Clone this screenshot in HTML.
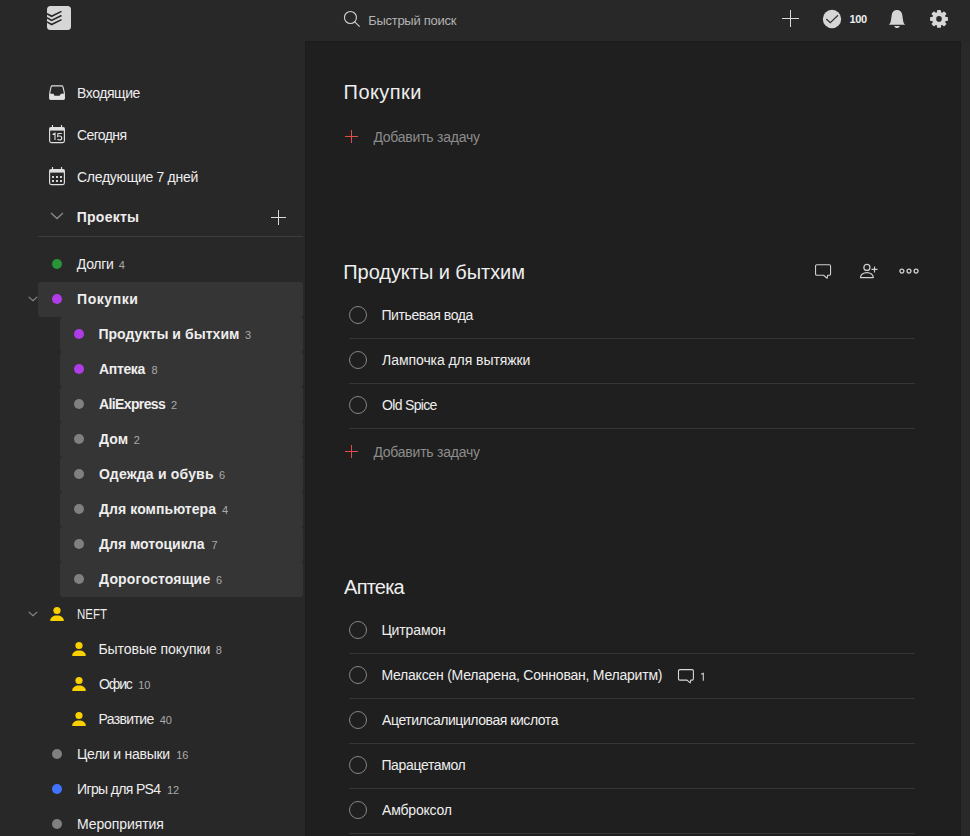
<!DOCTYPE html>
<html><head><meta charset="utf-8">
<style>
*{margin:0;padding:0;box-sizing:border-box}
html,body{width:970px;height:836px;overflow:hidden;background:#1f1f1f;font-family:"Liberation Sans",sans-serif;color:#eeeeee}
#top{position:absolute;left:0;top:0;width:970px;height:41px;background:#282828}
#side{position:absolute;left:0;top:41px;width:305px;height:795px;background:#282828}
#main{position:absolute;left:305px;top:41px;width:656px;height:795px;background:#1f1f1f}
#rstrip{position:absolute;left:961px;top:41px;width:9px;height:795px;background:#292929}
.t{position:absolute;white-space:nowrap}
.hl{position:absolute;background:#353535;border-radius:3px}
.dot{position:absolute;width:10px;height:10px;border-radius:50%}
.line{position:absolute;height:1px;background:#363636}
.circ{position:absolute;width:18px;height:18px;border:1px solid #858585;border-radius:50%}
svg{position:absolute;overflow:visible}
</style></head><body>
<div id="top"></div>
<div id="side"></div>
<div id="main"></div>
<div id="rstrip"></div>
<div style="position:absolute;left:0;top:41px;width:305px;height:1px;background:#262626"></div>
<div style="position:absolute;left:961px;top:41px;width:9px;height:1px;background:#262626"></div>
<div style="position:absolute;left:305px;top:41px;width:656px;height:1px;background:#1b1b1b"></div>
<div style="position:absolute;left:305px;top:41px;width:1px;height:795px;background:#1c1c1c"></div>
<div style="position:absolute;left:960px;top:41px;width:1px;height:795px;background:#1c1c1c"></div>
<svg style="left:47px;top:6px" width="24" height="24" viewBox="0 0 24 24">
<rect x="0" y="0" width="24" height="24" rx="3.5" fill="#d6d6d6"/>
<g fill="none" stroke="#282828" stroke-width="1.6" stroke-linejoin="miter">
<path d="M0 7.7 L4.6 10.3 L14.5 5.4"/>
<path d="M0 11.8 L4.6 14.4 L14.5 9.5"/>
<path d="M0 15.9 L4.6 18.5 L14.5 13.6"/>
</g></svg>
<svg style="left:343px;top:11px" width="18" height="17" viewBox="0 0 18 17">
<circle cx="7.45" cy="6.5" r="6.0" fill="none" stroke="#d0d0d0" stroke-width="1.1"/>
<path d="M11.7 10.8 L16.7 15.6" stroke="#d0d0d0" stroke-width="1.1"/>
</svg>
<div class="t" style="left:368.15px;top:10.89px;font-size:13px;line-height:20px;color:#b3b3b3;letter-spacing:-0.266px">Быстрый поиск</div>
<div style="position:absolute;left:790px;top:10px;width:1px;height:17px;background:#dadada"></div>
<div style="position:absolute;left:782px;top:18px;width:17px;height:1px;background:#dadada"></div>
<svg style="left:822px;top:9px" width="20" height="20" viewBox="0 0 20 20">
<circle cx="10" cy="10" r="9.2" fill="#d6d6d6"/>
<path d="M4.3 10 L8.3 13.7 L16 6.3" fill="none" stroke="#333" stroke-width="1.25"/>
</svg>
<div class="t" style="left:849.60px;top:9.19px;font-size:11px;line-height:20px;color:#eeeeee;letter-spacing:0.000px;font-weight:bold;letter-spacing:-0.45px">100</div>
<svg style="left:888px;top:9px" width="18" height="20" viewBox="0 0 18 20">
<path d="M9 1.0 C11.7 1.0 13.9 2.9 14.2 5.6 L15.0 11 C15.3 13.2 15.9 14.6 16.8 15.3 V15.8 H1.2 V15.3 C2.1 14.6 2.7 13.2 3.0 11 L3.8 5.6 C4.1 2.9 6.3 1.0 9 1.0 Z" fill="#d6d6d6"/>
<path d="M6.2 16.9 L11.8 16.9 C11.2 18.3 10.2 19 9 19 C7.8 19 6.8 18.3 6.2 16.9 Z" fill="#d6d6d6"/>
</svg>
<svg style="left:929px;top:9px" width="20" height="20" viewBox="0 0 20 20">
<g fill="#d6d6d6"><circle cx="10" cy="9.9" r="6.9"/><rect x="8" y="0.95" width="4" height="5" rx="0.9" transform="rotate(0 10 9.9)"/><rect x="8" y="0.95" width="4" height="5" rx="0.9" transform="rotate(45 10 9.9)"/><rect x="8" y="0.95" width="4" height="5" rx="0.9" transform="rotate(90 10 9.9)"/><rect x="8" y="0.95" width="4" height="5" rx="0.9" transform="rotate(135 10 9.9)"/><rect x="8" y="0.95" width="4" height="5" rx="0.9" transform="rotate(180 10 9.9)"/><rect x="8" y="0.95" width="4" height="5" rx="0.9" transform="rotate(225 10 9.9)"/><rect x="8" y="0.95" width="4" height="5" rx="0.9" transform="rotate(270 10 9.9)"/><rect x="8" y="0.95" width="4" height="5" rx="0.9" transform="rotate(315 10 9.9)"/></g>
<circle cx="10" cy="9.9" r="2.8" fill="#282828"/>
</svg>
<svg style="left:44px;top:80px" width="26" height="24" viewBox="0 0 26 24">
<path d="M8.2 5.85 H17.8 C18.4 5.85 18.8 6.2 18.9 6.7 L20.25 12.3 V18.6 C20.25 19 19.9 19.25 19.5 19.25 H6.5 C6.1 19.25 5.85 19 5.85 18.6 V12.3 L7.1 6.7 C7.2 6.2 7.6 5.85 8.2 5.85 Z" fill="none" stroke="#e0e0e0" stroke-width="1.1" stroke-linejoin="round"/>
<path d="M5.3 13.8 H9.5 L10.5 15.8 H15.6 L16.9 13.8 H20.8 V18.6 C20.8 19.3 20.3 19.8 19.6 19.8 H6.5 C5.8 19.8 5.3 19.3 5.3 18.6 Z" fill="#e0e0e0"/>
</svg>
<div class="t" style="left:77.00px;top:83.15px;font-size:14px;line-height:20px;color:#eeeeee;letter-spacing:-0.429px">Входящие</div>
<svg style="left:48px;top:124px" width="18" height="20" viewBox="0 0 18 20">
<rect x="1.6" y="3.6" width="14.8" height="15" rx="1.8" fill="none" stroke="#e0e0e0" stroke-width="1.15"/>
<rect x="1.6" y="3.6" width="14.8" height="3" fill="#e0e0e0"/>
<path d="M4.5 1 V4 M13.5 1 V4" stroke="#e0e0e0" stroke-width="1.15"/>
<path d="M4.6 10.4 L7 9.1 V16 M13.8 9.55 H10 L9.65 12.4 C10.15 12.1 10.75 11.95 11.45 11.95 C12.9 11.95 13.8 12.8 13.8 13.95 C13.8 15.2 12.8 15.95 11.45 15.95 C10.65 15.95 9.95 15.7 9.45 15.3" fill="none" stroke="#e0e0e0" stroke-width="1.1"/>
</svg>
<div class="t" style="left:77.00px;top:125.15px;font-size:14px;line-height:20px;color:#eeeeee;letter-spacing:-0.616px">Сегодня</div>
<svg style="left:48px;top:166px" width="18" height="20" viewBox="0 0 18 20">
<rect x="1.6" y="3.6" width="14.8" height="15" rx="1.8" fill="none" stroke="#e0e0e0" stroke-width="1.15"/>
<rect x="1.6" y="3.6" width="14.8" height="3" fill="#e0e0e0"/>
<path d="M4.5 1 V4 M13.5 1 V4" stroke="#e0e0e0" stroke-width="1.15"/>
<g fill="#d4d4d4"><rect x="4" y="10" width="2" height="2"/><rect x="8" y="10" width="2" height="2"/><rect x="12" y="10" width="2" height="2"/>
<rect x="4" y="14" width="2" height="2"/><rect x="8" y="14" width="2" height="2"/><rect x="12" y="14" width="2" height="2"/></g>
</svg>
<div class="t" style="left:77.00px;top:167.15px;font-size:14px;line-height:20px;color:#eeeeee;letter-spacing:-0.293px">Следующие 7 дней</div>
<svg style="left:50px;top:212px" width="14" height="8" viewBox="0 0 14 8">
<path d="M1 1 L7 6.5 L13 1" fill="none" stroke="#8a8a8a" stroke-width="1.3"/>
</svg>
<div class="t" style="left:76.69px;top:207.15px;font-size:14px;line-height:20px;color:#eeeeee;letter-spacing:0.267px;font-weight:bold">Проекты</div>
<div style="position:absolute;left:278px;top:210px;width:1px;height:15px;background:#dadada"></div>
<div style="position:absolute;left:271px;top:217px;width:15px;height:1px;background:#dadada"></div>
<div class="line" style="left:38px;top:236px;width:265px;background:#3d3d3d"></div>
<div class="dot" style="left:52px;top:259px;background:#299438"></div>
<div class="t" style="left:76.87px;top:254.15px;font-size:14px;line-height:20px;color:#eeeeee;letter-spacing:-0.325px">Долги</div>
<div class="t" style="left:118.70px;top:255.19px;font-size:11px;line-height:20px;color:#aaaaaa;letter-spacing:0.000px">4</div>
<div class="hl" style="left:38px;top:282px;width:265px;height:35px"></div>
<svg style="left:28px;top:296px" width="10" height="6" viewBox="0 0 10 6"><path d="M0.7 0.8 L5 4.7 L9.3 0.8" fill="none" stroke="#8a8a8a" stroke-width="1.1"/></svg>
<div class="dot" style="left:52px;top:294px;background:#b03ce8"></div>
<div class="t" style="left:77.00px;top:289.15px;font-size:14px;line-height:20px;color:#eeeeee;letter-spacing:0.583px;font-weight:bold">Покупки</div>
<div class="hl" style="left:60px;top:317px;width:243px;height:35px"></div>
<div class="dot" style="left:74px;top:329px;background:#b03ce8"></div>
<div class="t" style="left:98.38px;top:324.15px;font-size:14px;line-height:20px;color:#eeeeee;letter-spacing:0.051px;font-weight:bold">Продукты и бытхим</div>
<div class="t" style="left:244.90px;top:325.19px;font-size:11px;line-height:20px;color:#aaaaaa;letter-spacing:0.000px">3</div>
<div class="hl" style="left:60px;top:352px;width:243px;height:35px"></div>
<div class="dot" style="left:74px;top:364px;background:#b03ce8"></div>
<div class="t" style="left:99.08px;top:359.15px;font-size:14px;line-height:20px;color:#eeeeee;letter-spacing:-0.360px;font-weight:bold">Аптека</div>
<div class="t" style="left:151.50px;top:360.19px;font-size:11px;line-height:20px;color:#aaaaaa;letter-spacing:0.000px">8</div>
<div class="hl" style="left:60px;top:387px;width:243px;height:35px"></div>
<div class="dot" style="left:74px;top:399px;background:#808080"></div>
<div class="t" style="left:99.08px;top:394.15px;font-size:14px;line-height:20px;color:#eeeeee;letter-spacing:-0.633px;font-weight:bold">AliExpress</div>
<div class="t" style="left:171.00px;top:395.19px;font-size:11px;line-height:20px;color:#aaaaaa;letter-spacing:0.000px">2</div>
<div class="hl" style="left:60px;top:422px;width:243px;height:35px"></div>
<div class="dot" style="left:74px;top:434px;background:#808080"></div>
<div class="t" style="left:99.08px;top:429.15px;font-size:14px;line-height:20px;color:#eeeeee;letter-spacing:0.100px;font-weight:bold">Дом</div>
<div class="t" style="left:133.70px;top:430.19px;font-size:11px;line-height:20px;color:#aaaaaa;letter-spacing:0.000px">2</div>
<div class="hl" style="left:60px;top:457px;width:243px;height:35px"></div>
<div class="dot" style="left:74px;top:469px;background:#808080"></div>
<div class="t" style="left:99.08px;top:464.15px;font-size:14px;line-height:20px;color:#eeeeee;letter-spacing:0.185px;font-weight:bold">Одежда и обувь</div>
<div class="t" style="left:219.00px;top:465.19px;font-size:11px;line-height:20px;color:#aaaaaa;letter-spacing:0.000px">6</div>
<div class="hl" style="left:60px;top:492px;width:243px;height:35px"></div>
<div class="dot" style="left:74px;top:504px;background:#808080"></div>
<div class="t" style="left:99.08px;top:499.15px;font-size:14px;line-height:20px;color:#eeeeee;letter-spacing:0.061px;font-weight:bold">Для компьютера</div>
<div class="t" style="left:222.10px;top:500.19px;font-size:11px;line-height:20px;color:#aaaaaa;letter-spacing:0.000px">4</div>
<div class="hl" style="left:60px;top:527px;width:243px;height:35px"></div>
<div class="dot" style="left:74px;top:539px;background:#808080"></div>
<div class="t" style="left:99.08px;top:534.15px;font-size:14px;line-height:20px;color:#eeeeee;letter-spacing:-0.016px;font-weight:bold">Для мотоцикла</div>
<div class="t" style="left:211.50px;top:535.19px;font-size:11px;line-height:20px;color:#aaaaaa;letter-spacing:0.000px">7</div>
<div class="hl" style="left:60px;top:562px;width:243px;height:35px"></div>
<div class="dot" style="left:74px;top:574px;background:#808080"></div>
<div class="t" style="left:99.08px;top:569.15px;font-size:14px;line-height:20px;color:#eeeeee;letter-spacing:0.175px;font-weight:bold">Дорогостоящие</div>
<div class="t" style="left:216.00px;top:570.19px;font-size:11px;line-height:20px;color:#aaaaaa;letter-spacing:0.000px">6</div>
<svg style="left:28px;top:611px" width="10" height="6" viewBox="0 0 10 6"><path d="M0.7 0.8 L5 4.7 L9.3 0.8" fill="none" stroke="#8a8a8a" stroke-width="1.1"/></svg>
<svg style="left:49px;top:607px" width="16" height="16" viewBox="0 0 16 16"><circle cx="8" cy="3.5" r="3.6" fill="#fad000"/><path d="M1.2 13.6 C1.2 10.7 4.1 8.6 8 8.6 C11.9 8.6 14.8 10.7 14.8 13.6 C14.8 13.9 14.6 14 14.3 14 H1.7 C1.4 14 1.2 13.9 1.2 13.6 Z" fill="#fad000"/></svg>
<div class="t" style="left:77.00px;top:604.15px;font-size:14px;line-height:20px;color:#eeeeee;letter-spacing:0.000px;transform:scaleX(0.82);transform-origin:0 0">NEFT</div>
<svg style="left:71px;top:642px" width="16" height="16" viewBox="0 0 16 16"><circle cx="8" cy="3.5" r="3.6" fill="#fad000"/><path d="M1.2 13.6 C1.2 10.7 4.1 8.6 8 8.6 C11.9 8.6 14.8 10.7 14.8 13.6 C14.8 13.9 14.6 14 14.3 14 H1.7 C1.4 14 1.2 13.9 1.2 13.6 Z" fill="#fad000"/></svg>
<div class="t" style="left:98.38px;top:639.15px;font-size:14px;line-height:20px;color:#eeeeee;letter-spacing:-0.042px">Бытовые покупки</div>
<div class="t" style="left:215.80px;top:640.19px;font-size:11px;line-height:20px;color:#aaaaaa;letter-spacing:0.000px">8</div>
<svg style="left:71px;top:677px" width="16" height="16" viewBox="0 0 16 16"><circle cx="8" cy="3.5" r="3.6" fill="#fad000"/><path d="M1.2 13.6 C1.2 10.7 4.1 8.6 8 8.6 C11.9 8.6 14.8 10.7 14.8 13.6 C14.8 13.9 14.6 14 14.3 14 H1.7 C1.4 14 1.2 13.9 1.2 13.6 Z" fill="#fad000"/></svg>
<div class="t" style="left:99.08px;top:674.15px;font-size:14px;line-height:20px;color:#eeeeee;letter-spacing:-1.167px">Офис</div>
<div class="t" style="left:138.20px;top:675.19px;font-size:11px;line-height:20px;color:#aaaaaa;letter-spacing:0.000px">10</div>
<svg style="left:71px;top:712px" width="16" height="16" viewBox="0 0 16 16"><circle cx="8" cy="3.5" r="3.6" fill="#fad000"/><path d="M1.2 13.6 C1.2 10.7 4.1 8.6 8 8.6 C11.9 8.6 14.8 10.7 14.8 13.6 C14.8 13.9 14.6 14 14.3 14 H1.7 C1.4 14 1.2 13.9 1.2 13.6 Z" fill="#fad000"/></svg>
<div class="t" style="left:98.38px;top:709.15px;font-size:14px;line-height:20px;color:#eeeeee;letter-spacing:-0.614px">Развитие</div>
<div class="t" style="left:159.70px;top:710.19px;font-size:11px;line-height:20px;color:#aaaaaa;letter-spacing:0.000px">40</div>
<div class="dot" style="left:52px;top:749px;background:#808080"></div>
<div class="t" style="left:77.00px;top:744.15px;font-size:14px;line-height:20px;color:#eeeeee;letter-spacing:-0.258px">Цели и навыки</div>
<div class="t" style="left:176.20px;top:745.19px;font-size:11px;line-height:20px;color:#aaaaaa;letter-spacing:0.000px">16</div>
<div class="dot" style="left:52px;top:784px;background:#4073ff"></div>
<div class="t" style="left:77.00px;top:779.15px;font-size:14px;line-height:20px;color:#eeeeee;letter-spacing:-0.646px">Игры для PS4</div>
<div class="t" style="left:167.00px;top:780.19px;font-size:11px;line-height:20px;color:#aaaaaa;letter-spacing:0.000px">12</div>
<div class="dot" style="left:52px;top:819px;background:#808080"></div>
<div class="t" style="left:77.00px;top:814.15px;font-size:14px;line-height:20px;color:#eeeeee;letter-spacing:-0.090px">Мероприятия</div>
<div class="t" style="left:343.61px;top:79.07px;font-size:20px;line-height:26px;color:#eeeeee;letter-spacing:0.417px">Покупки</div>
<div style="position:absolute;left:351px;top:130px;width:1px;height:13px;background:#e04c48"></div>
<div style="position:absolute;left:345px;top:136px;width:13px;height:1px;background:#e04c48"></div>
<div class="t" style="left:373.39px;top:127.15px;font-size:14px;line-height:20px;color:#8c8c8c;letter-spacing:-0.236px">Добавить задачу</div>
<div class="t" style="left:343.30px;top:259.07px;font-size:20px;line-height:26px;color:#eeeeee;letter-spacing:-0.057px">Продукты и бытхим</div>
<svg style="left:814px;top:264px" width="18" height="16" viewBox="0 0 18 16">
<path d="M2.85 0.75 H15.25 C15.95 0.75 16.55 1.35 16.55 2.05 V9.95 C16.55 10.65 15.95 11.25 15.25 11.25 H13.6 L13.2 14.3 L9.6 11.25 H2.85 C2.15 11.25 1.55 10.65 1.55 9.95 V2.05 C1.55 1.35 2.15 0.75 2.85 0.75 Z" fill="none" stroke="#d0d0d0" stroke-width="1.1" stroke-linejoin="round"/>
</svg>
<svg style="left:856px;top:260px" width="26" height="22" viewBox="0 0 26 22">
<circle cx="10.9" cy="7.4" r="3.05" fill="none" stroke="#d0d0d0" stroke-width="1.2"/>
<path d="M4.5 17.6 C4.5 14.8 7.3 12.7 10.9 12.7 C14.5 12.7 17.3 14.8 17.3 17.6 Z" fill="none" stroke="#d0d0d0" stroke-width="1.2" stroke-linejoin="round"/>
<path d="M18.5 6.4 V12.4 M15.5 9.4 H21.5" stroke="#d0d0d0" stroke-width="1.15"/>
</svg>
<svg style="left:898px;top:267px" width="22" height="8" viewBox="0 0 22 8">
<g fill="none" stroke="#d0d0d0" stroke-width="1.3"><circle cx="3.9" cy="4.1" r="1.95"/><circle cx="11" cy="4.1" r="1.95"/><circle cx="18.1" cy="4.1" r="1.95"/></g>
</svg>
<div class="circ" style="left:349px;top:306px"></div>
<div class="t" style="left:381.38px;top:305.15px;font-size:14px;line-height:20px;color:#eeeeee;letter-spacing:-0.383px">Питьевая вода</div>
<div class="line" style="left:349px;top:338px;width:566px"></div>
<div class="circ" style="left:349px;top:351px"></div>
<div class="t" style="left:382.08px;top:350.15px;font-size:14px;line-height:20px;color:#eeeeee;letter-spacing:-0.069px">Лампочка для вытяжки</div>
<div class="line" style="left:349px;top:383px;width:566px"></div>
<div class="circ" style="left:349px;top:396px"></div>
<div class="t" style="left:382.08px;top:395.15px;font-size:14px;line-height:20px;color:#eeeeee;letter-spacing:-0.688px">Old Spice</div>
<div class="line" style="left:349px;top:428px;width:566px"></div>
<div style="position:absolute;left:351px;top:445px;width:1px;height:13px;background:#e04c48"></div>
<div style="position:absolute;left:345px;top:451px;width:13px;height:1px;background:#e04c48"></div>
<div class="t" style="left:373.39px;top:442.15px;font-size:14px;line-height:20px;color:#8c8c8c;letter-spacing:-0.236px">Добавить задачу</div>
<div class="t" style="left:344.08px;top:574.07px;font-size:20px;line-height:26px;color:#eeeeee;letter-spacing:-0.780px">Аптека</div>
<div class="circ" style="left:349px;top:621px"></div>
<div class="t" style="left:381.38px;top:620.15px;font-size:14px;line-height:20px;color:#eeeeee;letter-spacing:-0.129px">Цитрамон</div>
<div class="line" style="left:349px;top:653px;width:566px"></div>
<div class="circ" style="left:349px;top:666px"></div>
<div class="t" style="left:381.38px;top:665.15px;font-size:14px;line-height:20px;color:#eeeeee;letter-spacing:-0.222px">Мелаксен (Меларена, Соннован, Меларитм)</div>
<div class="line" style="left:349px;top:698px;width:566px"></div>
<svg style="left:676px;top:667px" width="20" height="18" viewBox="0 0 20 18">
<path d="M3.8 2.6 H16.1 C16.8 2.6 17.4 3.2 17.4 3.9 V11.8 C17.4 12.5 16.8 13.1 16.1 13.1 H14.8 L14.2 15.9 L11 13.1 H3.8 C3.1 13.1 2.5 12.5 2.5 11.8 V3.9 C2.5 3.2 3.1 2.6 3.8 2.6 Z" fill="none" stroke="#d8d8d8" stroke-width="1.1" stroke-linejoin="round"/>
<path d="M25.2 7.3 L27.3 6.4 V13.7" fill="none" stroke="#d0d0d0" stroke-width="1.1"/>
</svg>
<div class="circ" style="left:349px;top:711px"></div>
<div class="t" style="left:382.08px;top:710.15px;font-size:14px;line-height:20px;color:#eeeeee;letter-spacing:-0.442px">Ацетилсалициловая кислота</div>
<div class="line" style="left:349px;top:743px;width:566px"></div>
<div class="circ" style="left:349px;top:756px"></div>
<div class="t" style="left:381.38px;top:755.15px;font-size:14px;line-height:20px;color:#eeeeee;letter-spacing:-0.350px">Парацетамол</div>
<div class="line" style="left:349px;top:788px;width:566px"></div>
<div class="circ" style="left:349px;top:801px"></div>
<div class="t" style="left:382.08px;top:800.15px;font-size:14px;line-height:20px;color:#eeeeee;letter-spacing:-0.200px">Амброксол</div>
<div class="line" style="left:349px;top:833px;width:566px"></div>
</body></html>
